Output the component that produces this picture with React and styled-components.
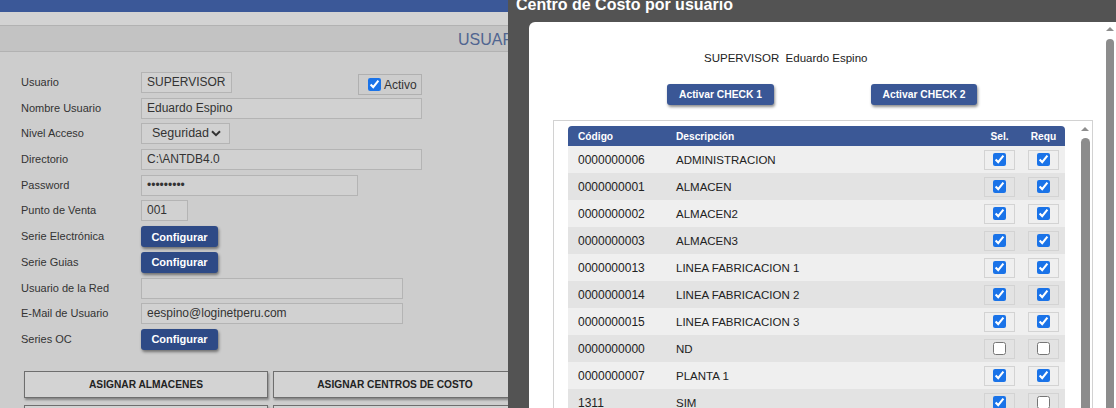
import React from 'react'
import styled, { createGlobalStyle } from 'styled-components'

const GlobalStyle = createGlobalStyle`
  html, body {
    margin: 0;
    padding: 0;
    overflow: hidden;
    background: #cdcdcd;
    font-family: "Liberation Sans", Arial, sans-serif;
  }
  * { box-sizing: border-box; }
`

const Screen = styled.div`
  position: relative;
  width: 1116px;
  height: 408px;
  overflow: hidden;
`

/* ---------- page behind the modal ---------- */

const Page = styled.div`
  width: 1116px;
  height: 408px;
  background: #cdcdcd;
`

const TopBar = styled.div`
  height: 12px;
  background: #3b5898;
`

const SubBar = styled.div`
  height: 14px;
  background: #d3d3d3;
  border-bottom: 1px solid #b2b2b2;
`

const TitleBand = styled.div`
  height: 26px;
  background: #c3c3c3;
  border-bottom: 1px solid #b2b2b2;
  padding: 5px 0 0 458px;
  font-size: 16px;
  color: #506590;
  white-space: nowrap;
`

const Form = styled.div`
  display: flex;
  flex-direction: column;
  gap: 4.7px;
  padding: 20px 0 0 21px;
`

const FormRow = styled.div`
  display: flex;
  align-items: flex-start;
  height: 21px;
`

const Label = styled.div`
  width: 120px;
  line-height: 21px;
  font-size: 11px;
  color: #333;
`

const Field = styled.div`
  width: ${p => p.w}px;
  height: 21px;
  line-height: 19px;
  padding: 0 5px;
  border: 1px solid #b4b4b4;
  background: #d1d1d1;
  font-size: 12px;
  color: #333;
  white-space: nowrap;
`

const SelectBox = styled(Field)`
  display: flex;
  align-items: center;
  justify-content: space-between;
  padding: 0 8px 0 10px;
  font-size: 12.5px;
`

const ActiveBox = styled.label`
  display: flex;
  align-items: center;
  gap: 3px;
  margin: 2px 0 0 126px;
  width: 64px;
  height: 21px;
  padding-left: 9px;
  border: 1px solid #b0b0b0;
  font-size: 12px;
  color: #333;
`

const Check = styled.input.attrs({ type: 'checkbox', readOnly: true })`
  width: 13px;
  height: 13px;
  margin: 0;
  accent-color: #1a73e8;
`

const BlueButton = styled.button`
  width: ${p => p.w}px;
  height: 21px;
  padding: 0;
  border: none;
  border-radius: 3px;
  background: ${p => p.bg || '#2e4a86'};
  color: #fff;
  font-family: inherit;
  font-weight: bold;
  font-size: ${p => p.fs || 11}px;
  box-shadow: 1px 2px 3px rgba(0, 0, 0, 0.45);
`

const ActionGrid = styled.div`
  display: grid;
  grid-template-columns: 244px 244px;
  grid-auto-rows: 27px;
  column-gap: 5px;
  row-gap: 7px;
  padding: 21.3px 0 0 24px;
`

const ActionButton = styled.button`
  height: 27px;
  border: 1px solid #6e6e6e;
  background: #d3d3d3;
  font-family: inherit;
  font-weight: bold;
  font-size: 10.2px;
  color: #222;
  box-shadow: 1px 2px 2px rgba(0, 0, 0, 0.35);
`

/* ---------- modal ---------- */

const Modal = styled.div`
  position: absolute;
  left: 508px;
  top: -14px;
  width: 610px;
  height: 440px;
  background: #535353;
  display: flex;
  flex-direction: column;
`

const ModalTitle = styled.div`
  flex-shrink: 0;
  height: 36px;
  padding: 8px 0 0 8px;
  line-height: 22px;
  font-size: 16px;
  font-weight: bold;
  color: #fff;
  white-space: nowrap;
`

const Panel = styled.div`
  flex: 1;
  min-height: 0;
  overflow: hidden;
  margin-left: 21px;
  background: #fff;
  border-radius: 6px 0 0 0;
  display: flex;
`

const PanelContent = styled.div`
  flex: 1;
  display: flex;
  flex-direction: column;
  padding: 29px 9px 0 24px;
`

const UserLine = styled.div`
  padding-left: 151px;
  font-size: 11.5px;
  line-height: 14px;
  color: #222;
`

const ButtonRow = styled.div`
  display: flex;
  gap: 97px;
  padding: 19px 0 0 114px;
`

const TableBox = styled.div`
  flex: 1;
  margin-top: 15px;
  border: 1px solid #d2d2d2;
  padding: 5px 0 0 14px;
  display: flex;
  gap: 13px;
`

const Table = styled.div`
  width: 497px;
`

const Cols = styled.div`
  display: grid;
  grid-template-columns: 98px 1fr 45px 43px;
  align-items: center;
`

const HeadRow = styled(Cols)`
  height: 20px;
  background: #3b5896;
  border-radius: 4px 4px 0 0;
  color: #fff;
  font-weight: bold;
  font-size: 10.2px;
`

const BodyRow = styled(Cols)`
  height: 27px;
  background: ${p => (p.odd ? '#e3e3e3' : '#efefef')};
  font-size: 12px;
  color: #222;
`

const Cell = styled.div`
  padding-left: ${p => p.pl ?? 10}px;
  text-align: ${p => p.center ? 'center' : 'left'};
  white-space: nowrap;
`

const Desc = styled(Cell)`
  font-size: 11.5px;
`

const CheckCell = styled.div`
  display: flex;
  justify-content: center;
`

const CheckFrame = styled.div`
  width: 31px;
  height: 20px;
  border: 1px solid #d3d3d3;
  display: flex;
  align-items: center;
  justify-content: center;
`

const ScrollTrack = styled.div`
  width: ${p => p.w}px;
  display: flex;
  flex-direction: column;
  align-items: center;
  padding-top: ${p => p.top}px;
  background: #fff;
`

const Arrow = styled.div`
  width: 0;
  height: 0;
  border-left: 4px solid transparent;
  border-right: 4px solid transparent;
  border-bottom: 4px solid #8e8e8e;
`

const Thumb = styled.div`
  flex: 1;
  width: ${p => p.w}px;
  margin-top: ${p => p.gap}px;
  background: #8c8c8c;
  border-radius: 5px 5px 0 0;
`

const Chevron = () => (
  <svg width="10" height="7" viewBox="0 0 10 7">
    <path d="M1 1.2 L5 5.2 L9 1.2" fill="none" stroke="#333" strokeWidth="2" />
  </svg>
)

const rows = [
  ['0000000006', 'ADMINISTRACION', true, true],
  ['0000000001', 'ALMACEN', true, true],
  ['0000000002', 'ALMACEN2', true, true],
  ['0000000003', 'ALMACEN3', true, true],
  ['0000000013', 'LINEA FABRICACION 1', true, true],
  ['0000000014', 'LINEA FABRICACION 2', true, true],
  ['0000000015', 'LINEA FABRICACION 3', true, true],
  ['0000000000', 'ND', false, false],
  ['0000000007', 'PLANTA 1', true, true],
  ['1311', 'SIM', true, false],
]

const App = () => {
  return (
    <Screen>
      <GlobalStyle />
      <Page>
        <TopBar />
        <SubBar />
        <TitleBand>USUARIOS</TitleBand>

        <Form>
          <FormRow>
            <Label>Usuario</Label>
            <Field w={91}>SUPERVISOR</Field>
            <ActiveBox><Check checked />Activo</ActiveBox>
          </FormRow>
          <FormRow>
            <Label>Nombre Usuario</Label>
            <Field w={281}>Eduardo Espino</Field>
          </FormRow>
          <FormRow>
            <Label>Nivel Acceso</Label>
            <SelectBox w={89}>Seguridad<Chevron /></SelectBox>
          </FormRow>
          <FormRow>
            <Label>Directorio</Label>
            <Field w={281}>C:\ANTDB4.0</Field>
          </FormRow>
          <FormRow>
            <Label>Password</Label>
            <Field w={217}>•••••••••</Field>
          </FormRow>
          <FormRow>
            <Label>Punto de Venta</Label>
            <Field w={47}>001</Field>
          </FormRow>
          <FormRow>
            <Label>Serie Electrónica</Label>
            <BlueButton w={77}>Configurar</BlueButton>
          </FormRow>
          <FormRow>
            <Label>Serie Guias</Label>
            <BlueButton w={77}>Configurar</BlueButton>
          </FormRow>
          <FormRow>
            <Label>Usuario de la Red</Label>
            <Field w={262}></Field>
          </FormRow>
          <FormRow>
            <Label>E-Mail de Usuario</Label>
            <Field w={262}>eespino@loginetperu.com</Field>
          </FormRow>
          <FormRow>
            <Label>Series OC</Label>
            <BlueButton w={77}>Configurar</BlueButton>
          </FormRow>
        </Form>

        <ActionGrid>
          <ActionButton>ASIGNAR ALMACENES</ActionButton>
          <ActionButton>ASIGNAR CENTROS DE COSTO</ActionButton>
          <ActionButton />
          <ActionButton />
        </ActionGrid>
      </Page>

      <Modal>
        <ModalTitle>Centro de Costo por usuario</ModalTitle>
        <Panel>
          <PanelContent>
            <UserLine>SUPERVISOR&nbsp; Eduardo Espino</UserLine>
            <ButtonRow>
              <BlueButton w={107} bg="#3a5796" fs={10.3}>Activar CHECK 1</BlueButton>
              <BlueButton w={106} bg="#3a5796" fs={10.3}>Activar CHECK 2</BlueButton>
            </ButtonRow>
            <TableBox>
              <Table>
                <HeadRow>
                  <Cell>Código</Cell>
                  <Cell>Descripción</Cell>
                  <Cell pl={0} center>Sel.</Cell>
                  <Cell pl={0} center>Requ</Cell>
                </HeadRow>
                {rows.map(([code, desc, sel, req], i) => (
                  <BodyRow key={code} odd={i % 2 === 1}>
                    <Cell>{code}</Cell>
                    <Desc>{desc}</Desc>
                    <CheckCell><CheckFrame><Check checked={sel} /></CheckFrame></CheckCell>
                    <CheckCell><CheckFrame><Check checked={req} /></CheckFrame></CheckCell>
                  </BodyRow>
                ))}
              </Table>
              <ScrollTrack w={14} top={1}>
                <Arrow />
                <Thumb w={9} gap={7} />
              </ScrollTrack>
            </TableBox>
          </PanelContent>
          <ScrollTrack w={16} top={5}>
            <Arrow />
            <Thumb w={8} gap={8} />
          </ScrollTrack>
        </Panel>
      </Modal>
    </Screen>
  )
}

export default App
